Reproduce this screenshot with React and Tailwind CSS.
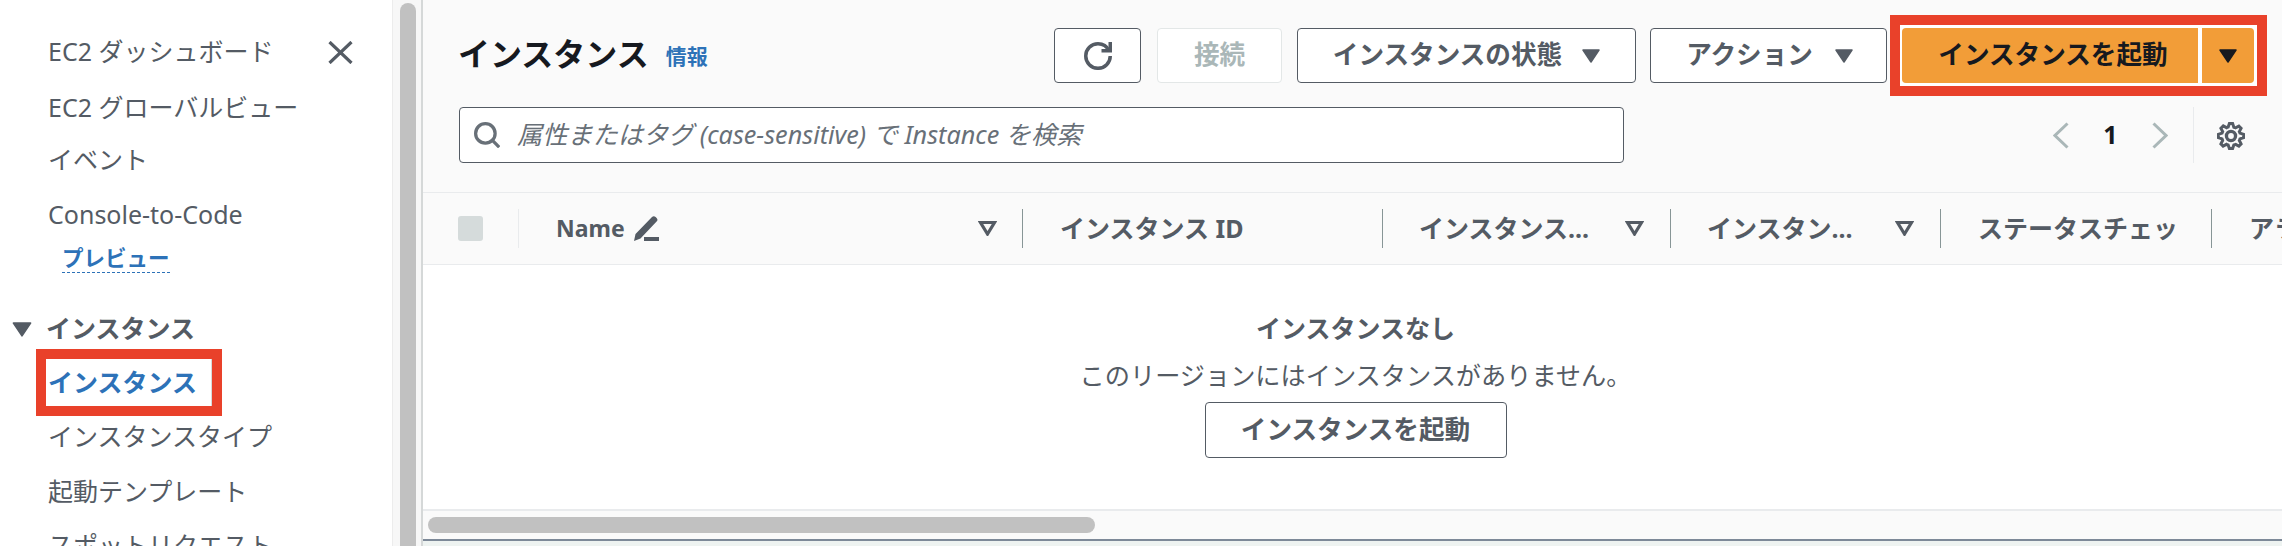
import React from "react";

const Tri = ({ className }) => (
  <svg viewBox="0 0 18 14" className={className} fill="currentColor">
    <path d="M1 1h16L9 13z" stroke="currentColor" strokeWidth="1.5" strokeLinejoin="round" />
  </svg>
);

const Filter = () => (
  <svg viewBox="0 0 19 15" className="w-[19px] h-[15px] text-[#545b64] shrink-0" fill="none" stroke="currentColor" strokeWidth="3.2" strokeLinejoin="miter">
    <path d="M2.5 1.5h14L9.5 13z" />
  </svg>
);

const Pencil = () => (
  <svg viewBox="0 0 25 25" className="w-[25px] h-[25px] ml-[9px] shrink-0 text-[#545b64]" fill="currentColor">
    <path d="M0 25l1.5-7L18 1a2.6 2.6 0 0 1 3.6 0l1 1a2.6 2.6 0 0 1 0 3.6L6.5 22.5z" />
    <rect x="10" y="21" width="15" height="4" />
  </svg>
);

const NavRow = ({ className, children }) => (
  <div className={"flex items-center whitespace-nowrap pl-[48px] " + className}>{children}</div>
);

function Sidebar() {
  return (
    <aside className="w-[392px] shrink-0 bg-white pt-[24px] text-[25px] text-[#545b64]">
      <div className="flex items-center justify-between h-[56px] pl-[48px] pr-[39px]">
        <span>EC2 ダッシュボード</span>
        <svg viewBox="0 0 25 23" className="w-[25px] h-[23px] text-[#545b64]" fill="none" stroke="currentColor" strokeWidth="3.2">
          <path d="M1.5 1l22 21M23.5 1l-22 21" />
        </svg>
      </div>
      <NavRow className="h-[56px]">EC2 グローバルビュー</NavRow>
      <NavRow className="h-[48px]">イベント</NavRow>
      <NavRow className="h-[62px]">Console-to-Code</NavRow>
      <div className="w-fit ml-[62px] border-b-[1.5px] border-dashed border-[#2d72b8] text-[21.5px] leading-[24px] pb-[2px] font-bold text-[#2d72b8]">
        プレビュー
      </div>
      <div className="flex items-center h-[32px] mt-[40px] pl-[12px] font-bold">
        <Tri className="w-[20px] h-[15px] text-[#545b64]" />
        <span className="ml-[14px]">インスタンス</span>
      </div>
      <div className="w-[186px] h-[67px] ml-[36px] mt-[4px] border-[10px] border-[#e9412a] flex items-center pl-[2px] font-bold text-[#2d72b8] whitespace-nowrap [box-shadow:inset_-1px_0_0_#d5dbdb]">
        インスタンス
      </div>
      <NavRow className="h-[40px] pt-[2px]">インスタンスタイプ</NavRow>
      <NavRow className="h-[40px] mt-[15px] pt-[2px]">起動テンプレート</NavRow>
      <NavRow className="h-[40px] mt-[15px]">スポットリクエスト</NavRow>
    </aside>
  );
}

function Scrollbar() {
  return (
    <div className="w-[31px] shrink-0 bg-[#f7f7f7] border-l border-[#ececec] border-r-[2px] border-r-[#d5d8d8] pl-[7px] pt-[3px]">
      <div className="w-[16px] h-[600px] rounded-full bg-[#c1c1c1]" />
    </div>
  );
}

const Btn = ({ className, children }) => (
  <button className={"h-[55px] shrink-0 rounded-[4px] border-[1.5px] border-[#545b64] bg-white font-bold text-[#545b64] text-[25.6px] flex items-center justify-center whitespace-nowrap " + className}>
    {children}
  </button>
);

function TopBar() {
  return (
    <div className="flex items-center h-[81px] mt-[15px] pl-[35px] pr-[15px]">
      <h1 className="text-[32px] font-bold text-[#16191f] mt-[-3px]">インスタンス</h1>
      <a className="ml-[17px] mt-[3px] text-[21px] font-bold text-[#2d72b8]">情報</a>
      <div className="flex-1" />
      <Btn className="w-[87px] mr-[16px]">
        <svg viewBox="0 0 16 16" className="w-[28px] h-[28px]" fill="none" stroke="#545b64" strokeWidth="2">
          <path d="M10 5h5V0" />
          <path d="M15 8.01c0 3.87-3.13 7-7 7s-7-3.13-7-7 3.13-7 7-7c2.79 0 5.2 1.63 6.33 4" />
        </svg>
      </Btn>
      <button className="w-[125px] h-[55px] shrink-0 mr-[15px] rounded-[4px] border-[1.5px] border-[#e3e7e7] bg-white font-bold text-[#aab7b8] text-[25.6px]">接続</button>
      <Btn className="w-[339px] mr-[14px]">
        インスタンスの状態
        <Tri className="w-[18px] h-[14px] ml-[20px]" />
      </Btn>
      <Btn className="w-[237px] mr-[3px] pl-[2px]">
        アクション
        <Tri className="w-[18px] h-[14px] ml-[22px]" />
      </Btn>
      <div className="w-[377px] h-[81px] shrink-0 border-[10px] border-[#e9412a] bg-white pl-[2px] pr-[3px] py-[3px] flex gap-[4px]">
        <button className="w-[296px] h-[55px] rounded-l-[4px] bg-[#f29d38] pl-[6px] font-bold text-[#16191f] text-[25.6px] whitespace-nowrap">インスタンスを起動</button>
        <button className="w-[52px] h-[55px] rounded-r-[4px] bg-[#f29d38] flex items-center justify-center">
          <Tri className="w-[18px] h-[14px] text-[#16191f]" />
        </button>
      </div>
    </div>
  );
}

function SearchBar() {
  return (
    <div className="flex items-start mt-[11px] pl-[36px]">
      <div className="w-[1165px] h-[56px] rounded-[4px] border-[1.5px] border-[#545b64] bg-white flex items-center pl-[14px]">
        <svg viewBox="0 0 16 16" className="w-[26px] h-[26px] shrink-0" fill="none" stroke="#687078" strokeWidth="2">
          <circle cx="7" cy="7" r="6" />
          <path d="M11.5 11.5L15.5 15.5" />
        </svg>
        <span className="ml-[17px] italic text-[25.2px] text-[#687078] whitespace-nowrap">属性またはタグ (case-sensitive) で Instance を検索</span>
      </div>
      <div className="flex items-center h-[56px] ml-[429px] w-[141px] justify-between border-r border-[#e9ebed] pr-[25px]">
        <svg viewBox="0 0 16 27" className="w-[16px] h-[27px]" fill="none" stroke="#aab7b8" strokeWidth="3"><path d="M14.5 1.5L2 13.5l12.5 12" /></svg>
        <span className="font-bold text-[#16191f]">1</span>
        <svg viewBox="0 0 16 27" className="w-[16px] h-[27px]" fill="none" stroke="#aab7b8" strokeWidth="3"><path d="M1.5 1.5L14 13.5 1.5 25.5" /></svg>
      </div>
      <svg viewBox="0 0 16 16" className="w-[28px] h-[28px] ml-[23px] mt-[15px]" fill="none" stroke="#545b64" strokeWidth="1.9">
        <path d="M13.3 5.2l1.1-2.1L13 1.7l-2.1 1.1c-.3-.2-.7-.3-1.1-.4L9 0H7l-.8 2.3c-.3.1-.7.2-1 .4L3.1 1.6 1.6 3.1l1.1 2.1c-.2.3-.3.7-.4 1L0 7v2l2.3.8c.1.4.3.7.4 1.1l-1.1 2.1 1.4 1.4 2.1-1.1c.3.2.7.3 1.1.4L7 16h2l.8-2.3c.4-.1.7-.3 1.1-.4l2.1 1.1 1.4-1.4-1.1-2.1c.2-.3.3-.7.4-1.1L16 9V7l-2.3-.8c-.1-.3-.2-.7-.4-1z" transform="translate(.8 .8) scale(.9)" />
        <circle cx="8" cy="8" r="2.6" />
      </svg>
    </div>
  );
}

function TableHeader() {
  return (
    <div className="flex items-center h-[73px] bg-[#fafafa] border-t border-b border-[#e9ebed] font-bold text-[#545b64] whitespace-nowrap">
      <div className="w-[96px] h-[39px] shrink-0 pl-[35px] border-r border-[#e9ebed] flex items-center">
        <div className="w-[25px] h-[25px] rounded-[3px] bg-[#d5dbdb]" />
      </div>
      <div className="w-[504px] h-[39px] shrink-0 pl-[37px] pr-[25px] border-r border-[#879596] flex items-center">
        <span className="text-[23px]">Name</span>
        <Pencil />
        <div className="flex-1" />
        <Filter />
      </div>
      <div className="w-[360px] h-[39px] shrink-0 pl-[37px] border-r border-[#879596] flex items-center">インスタンス ID</div>
      <div className="w-[288px] h-[39px] shrink-0 pl-[36px] pr-[26px] border-r border-[#879596] flex items-center">
        インスタンス...
        <div className="flex-1" />
        <Filter />
      </div>
      <div className="w-[270px] h-[39px] shrink-0 pl-[36px] pr-[26px] border-r border-[#879596] flex items-center">
        インスタン...
        <div className="flex-1" />
        <Filter />
      </div>
      <div className="w-[271px] h-[39px] shrink-0 pl-[37px] border-r border-[#879596] flex items-center">ステータスチェッ</div>
      <div className="flex-1 min-w-0 pl-[37px] overflow-hidden">アラームのステータス</div>
    </div>
  );
}

function EmptyState() {
  return (
    <div className="h-[244px] bg-white flex flex-col items-center pt-[51px] pl-[6px] text-[#545b64]">
      <div className="font-bold leading-[24px]">インスタンスなし</div>
      <div className="mt-[23px] leading-[24px] text-[25.2px] whitespace-nowrap">このリージョンにはインスタンスがありません。</div>
      <button className="mt-[15px] w-[302px] h-[56px] rounded-[4px] border-[1.5px] border-[#545b64] bg-white font-bold text-[25.6px]">インスタンスを起動</button>
    </div>
  );
}

export default function App() {
  return (
    <div className="flex w-[2282px] h-[546px] overflow-hidden bg-white text-[25px] [font-family:'Noto_Sans','Noto_Sans_CJK_JP',sans-serif]">
      <Sidebar />
      <Scrollbar />
      <main className="flex-1 min-w-0 flex flex-col">
        <div className="h-[192px] bg-[#fafafa] overflow-hidden">
          <TopBar />
          <SearchBar />
        </div>
        <TableHeader />
        <EmptyState />
        <div className="h-[30px] bg-[#fafafa] border-t-[2px] border-[#e9ebed] pl-[5px] pt-[6px]">
          <div className="w-[667px] h-[16px] rounded-full bg-[#c1c1c1]" />
        </div>
        <div className="flex-1 bg-[#eef3f1] border-t-[2px] border-[#7d8998]" />
      </main>
    </div>
  );
}
